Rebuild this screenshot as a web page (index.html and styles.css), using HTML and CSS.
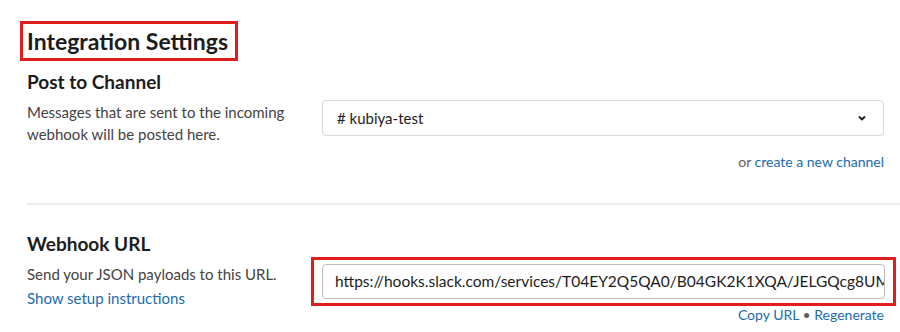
FILE: index.html
```html
<!DOCTYPE html>
<html lang="en">
<head>
  <meta charset="UTF-8">
  <title>Integration Settings</title>
  <link rel="stylesheet" href="styles.css">
</head>
<body>
  <h1><span class="mark">Integration Settings</span></h1>

  <section class="row">
    <div class="info">
      <h2>Post to Channel</h2>
      <p>Messages that are sent to the incoming webhook will be posted here.</p>
    </div>
    <div class="field">
      <div class="select">
        <span># kubiya-test</span>
        <svg width="10" height="6" viewBox="0 0 10 6"><path d="M2 1.5 L5 4.5 L8 1.5" fill="none" stroke="#1d1c1d" stroke-width="1.8"/></svg>
      </div>
      <div class="links">or <a href="#">create a new channel</a></div>
    </div>
  </section>

  <hr>

  <section class="row webhook">
    <div class="info">
      <h2>Webhook URL</h2>
      <p>Send your JSON payloads to this URL.<br><a href="#">Show setup instructions</a></p>
    </div>
    <div class="field">
      <div class="mark-box">
        <div class="url">https://hooks.slack.com/services/T04EY2Q5QA0/B04GK2K1XQA/JELGQcg8UM</div>
      </div>
      <div class="links"><a href="#">Copy URL</a> &bull; <a href="#">Regenerate</a></div>
    </div>
  </section>
</body>
</html>
```

FILE: styles.css
```css
body { margin: 0; padding: 0 16px 0 27px; background: #fff; color: #1d1c1d; font-family: Lato, "Noto Sans", sans-serif; overflow: hidden; }
a { color: #1a6bb0; text-decoration: none; }
h1 { margin: 21px 0 0 -7px; font-size: 23px; font-weight: 700; line-height: 34px; }
.mark { display: inline-block; border: 3px solid #e01e1e; padding: 0 7px 0 4px; }
h2 { margin: 0; font-size: 19px; font-weight: 700; line-height: 24px; }
p { margin: 7px 0 0; font-size: 15px; line-height: 22px; color: #454245; }
.row { display: flex; margin-top: 9px; }
.info { width: 295px; flex-shrink: 0; }
.field { flex: 1; min-width: 0; }
.select {
  display: flex;
  justify-content: space-between;
  align-items: center;
  height: 34px;
  margin-top: 30px;
  padding: 0 16px 0 14px;
  border: 1px solid #d8d8d8;
  border-radius: 4px;
  font-size: 15px;
}
.links { text-align: right; font-size: 14px; color: #616061; margin-top: 17px; }
hr { border: none; border-top: 2px solid #ececec; margin: 33px -16px 0 0; }
.webhook { margin-top: 27px; }
.webhook p { margin-top: 6px; line-height: 24px; }
.mark-box { margin: 25px -12px 0 -11px; border: 3px solid #e01e1e; padding: 4px 8px; }
.url {
  height: 33px;
  line-height: 33px;
  padding: 0 4px 0 12px;
  border: 1px solid #bcbcbc;
  border-radius: 4px;
  font-size: 15.5px;
  white-space: nowrap;
  overflow: hidden;
  color: #1d1c1d;
}
.webhook .links { margin-top: 0; }
```
